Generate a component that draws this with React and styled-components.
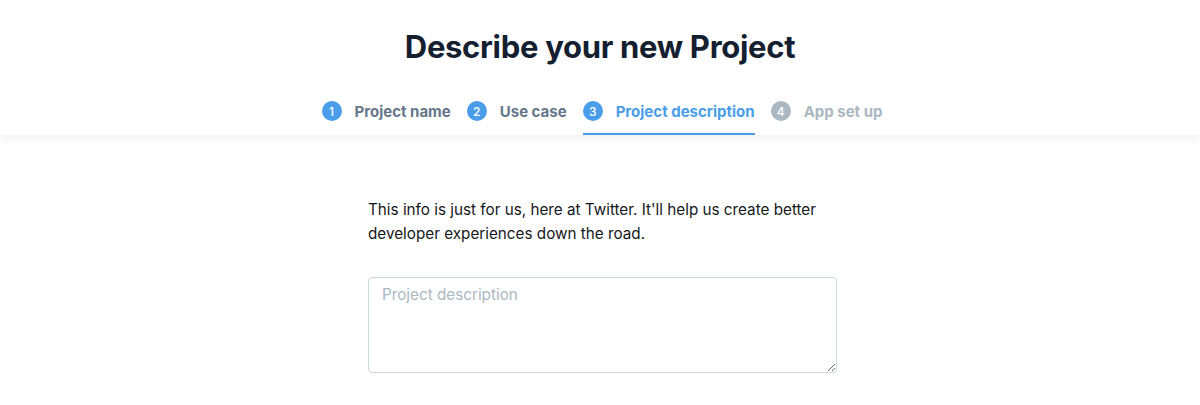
import React, { useState } from "react";
import styled, { createGlobalStyle } from "styled-components";

const GlobalStyle = createGlobalStyle`
  body {
    margin: 0;
    background: #ffffff;
    font-family: Inter, "Noto Sans", sans-serif;
  }
`;

const Header = styled.header`
  background: #fff;
  padding-top: 27px;
  box-shadow: 0 2px 10px rgba(20, 23, 26, 0.08);
  position: relative;
`;

const Title = styled.h1`
  margin: 0;
  text-align: center;
  font-size: 31px;
  line-height: 40px;
  font-weight: 700;
  color: #14202f;
  letter-spacing: -0.3px;
`;

const Steps = styled.nav`
  display: flex;
  justify-content: center;
  gap: 16px;
  margin-top: 22px;
  padding-left: 4px;
`;

const Step = styled.div`
  display: flex;
  align-items: center;
  gap: 13px;
  height: 46px;
  box-sizing: border-box;
  border-bottom: 2px solid ${(p) => (p.$active ? "#4a9ee9" : "transparent")};
`;

const Circle = styled.span`
  width: 20px;
  height: 20px;
  border-radius: 50%;
  background: ${(p) => (p.$disabled ? "#aab8c2" : "#4a9ee9")};
  color: #fff;
  font-size: 12px;
  font-weight: 500;
  display: flex;
  align-items: center;
  justify-content: center;
`;

const StepLabel = styled.span`
  font-size: 15px;
  font-weight: 700;
  color: ${(p) =>
    p.$active ? "#4a9ee9" : p.$disabled ? "#aab8c2" : "#66778a"};
`;

const Content = styled.main`
  width: 469px;
  margin-left: calc(50% - 232px);
  padding-top: 63px;
`;

const Intro = styled.p`
  margin: 0;
  font-size: 15.25px;
  line-height: 24px;
  color: #14171a;
`;

const TextArea = styled.textarea`
  display: block;
  margin-top: 31px;
  width: 469px;
  height: 96px;
  box-sizing: border-box;
  border: 1px solid #ccd6dd;
  border-radius: 4px;
  padding: 6px 13px;
  font-family: Inter, "Noto Sans", sans-serif;
  font-size: 15.25px;
  line-height: 22px;
  color: #14171a;
  outline: none;
  &::placeholder {
    color: #aab8c2;
  }
`;

const steps = [
  { n: 1, label: "Project name" },
  { n: 2, label: "Use case" },
  { n: 3, label: "Project description", active: true },
  { n: 4, label: "App set up", disabled: true },
];

const App = () => {
  const [description, setDescription] = useState("");

  return (
    <>
      <GlobalStyle />
      <Header>
        <Title>Describe your new Project</Title>
        <Steps>
          {steps.map((s) => (
            <Step key={s.n} $active={s.active}>
              <Circle $disabled={s.disabled}>{s.n}</Circle>
              <StepLabel $active={s.active} $disabled={s.disabled}>
                {s.label}
              </StepLabel>
            </Step>
          ))}
        </Steps>
      </Header>
      <Content>
        <Intro>
          This info is just for us, here at Twitter. It'll help us create better
          developer experiences down the road.
        </Intro>
        <TextArea
          placeholder="Project description"
          value={description}
          onChange={(e) => setDescription(e.target.value)}
        />
      </Content>
    </>
  );
};

export default App;
